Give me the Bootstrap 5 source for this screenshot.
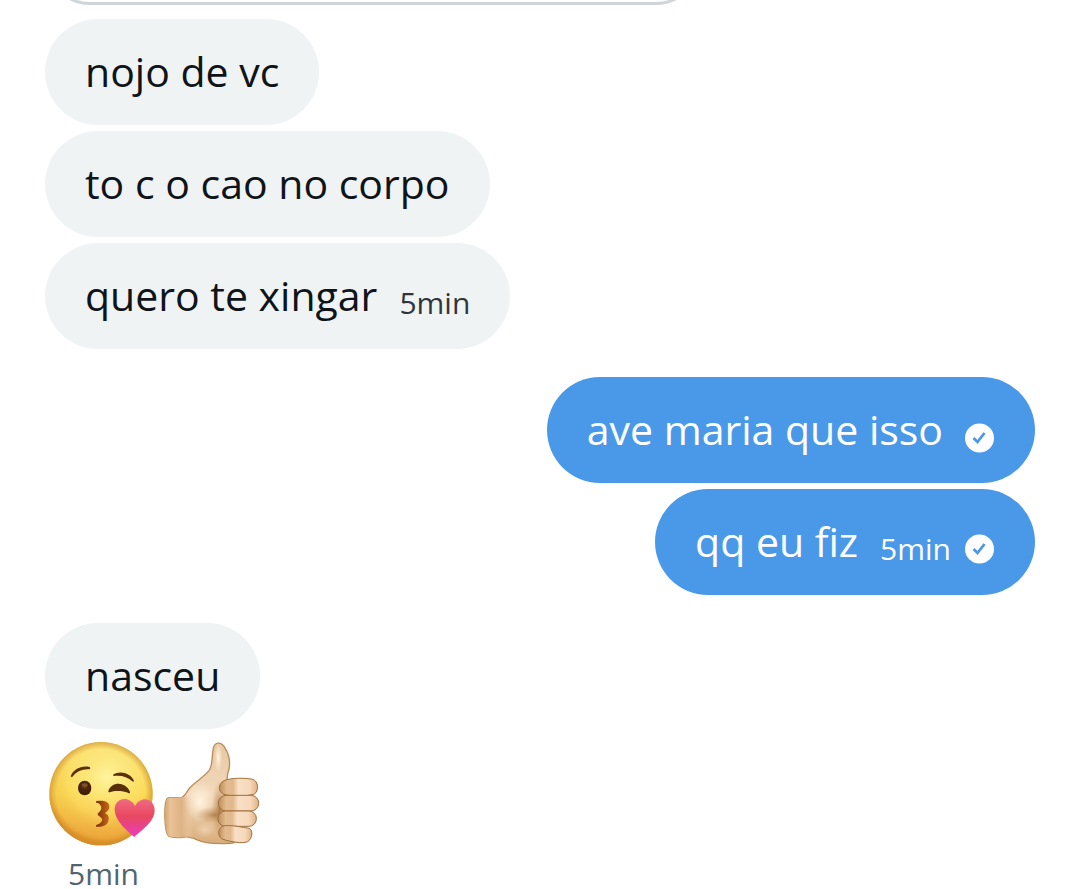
<!DOCTYPE html>
<html lang="pt-BR">
<head>
<meta charset="utf-8">
<meta name="viewport" content="width=device-width, initial-scale=1">
<title>Mensagens</title>
<link href="https://cdn.jsdelivr.net/npm/bootstrap@5.3.0/dist/css/bootstrap.min.css" rel="stylesheet">
<style>
  body { font-family: "Open Sans", "Noto Sans", sans-serif; color: #0f1419; background: #fff; }
  .chat { padding: 0 45px; }
  .preview-clip { height: 5px; margin-bottom: 14px; }
  .preview { width: 656px; height: 120px; border: 3px solid #cfd5d8; border-radius: 45px; }
  .turn { gap: 6px; margin-bottom: 28px; }
  .bubble { padding: 23px 40px 25px; border-radius: 53px; background: #eff3f4; font-size: 41px; line-height: 58px; gap: 22px; }
  .sent .bubble { background: #4a99e9; color: #fff; }
  .meta { font-size: 30px; line-height: 40px; gap: 14px; color: #2f363b; margin-bottom: 1px; }
  .sent .meta { color: #fff; }
  .tick { width: 30px; height: 30px; }
  .emojis { gap: 9px; margin: 6px 0 0 3px; }
  .below { font-size: 30px; line-height: 30px; color: #536471; padding-left: 23px; margin-top: 6px; }
</style>
</head>
<body>
<main class="chat">
  <div class="preview-clip d-flex align-items-end overflow-hidden"><div class="preview flex-shrink-0"></div></div>

  <section class="turn d-flex flex-column align-items-start">
    <div class="bubble d-flex">nojo de vc</div>
    <div class="bubble d-flex">to c o cao no corpo</div>
    <div class="bubble d-flex align-items-end"><span>quero te xingar</span><time class="meta">5min</time></div>
  </section>

  <section class="turn sent d-flex flex-column align-items-end">
    <div class="bubble d-flex align-items-end"><span>ave maria que isso</span>
      <span class="meta d-flex align-items-center"><svg class="tick my-1" viewBox="0 0 30 30" role="img" aria-label="Enviada"><circle cx="14.500" cy="15" r="14.500" fill="#fff"/><path d="M8.500 15l4 4 7-9" fill="none" stroke="#4a99e9" stroke-width="2.800"/></svg></span>
    </div>
    <div class="bubble d-flex align-items-end"><span>qq eu fiz</span>
      <span class="meta d-flex align-items-center"><time>5min</time><svg class="tick my-1" viewBox="0 0 30 30" role="img" aria-label="Enviada"><circle cx="14.500" cy="15" r="14.500" fill="#fff"/><path d="M8.500 15l4 4 7-9" fill="none" stroke="#4a99e9" stroke-width="2.800"/></svg></span>
    </div>
  </section>

  <section class="d-flex flex-column align-items-start turn mb-0">
    <div class="bubble d-flex">nasceu</div>
    <div class="emojis d-flex">
      <svg width="107" height="106" viewBox="24 18 321 318" role="img" aria-label="Rosto mandando beijo">
        <defs>
          <linearGradient id="skin" x1="0" y1="0" x2="0" y2="1"><stop offset="0" stop-color="#f7df7c"/><stop offset=".5" stop-color="#f9d552"/><stop offset="1" stop-color="#eb9f3c"/></linearGradient>
          <radialGradient id="shine" cx=".56" cy=".34" r=".64"><stop offset="0" stop-color="#fff6a5" stop-opacity=".9"/><stop offset=".6" stop-color="#ffe568" stop-opacity=".4"/><stop offset=".88" stop-color="#edaa30" stop-opacity=".15"/><stop offset="1" stop-color="#d98a1c" stop-opacity=".65"/></radialGradient>
          <radialGradient id="rim"><stop offset=".86" stop-color="#cc8a26" stop-opacity="0"/><stop offset="1" stop-color="#c98a2c" stop-opacity=".6"/></radialGradient>
          <linearGradient id="heart" x1="0" y1="0" x2="0" y2="1"><stop offset="0" stop-color="#ef6b83"/><stop offset=".45" stop-color="#e8485f"/><stop offset="1" stop-color="#e93bc0"/></linearGradient>
          <linearGradient id="lips" x1="0" x2="1"><stop offset="0" stop-color="#792c08"/><stop offset="1" stop-color="#c66a18"/></linearGradient>
          <radialGradient id="eye" cx=".5" cy=".35"><stop offset="0" stop-color="#7c491c"/><stop offset=".5" stop-color="#4b260c"/><stop offset="1" stop-color="#432006"/></radialGradient>
        </defs>
        <circle cx="183" cy="176" r="155" fill="url(#skin)"/>
        <circle cx="183" cy="176" r="155" fill="url(#shine)"/>
        <circle cx="183" cy="176" r="155" fill="url(#rim)"/>
        <path d="M92 124C101 102 124 91 149 96C152 98 151 103 147 103C125 102 108 110 96 127Z" fill="#5b3006"/>
        <path d="M219 119C240 105 272 114 282 137C283 140 279 141 276 138C262 126 245 120 221 123Z" fill="#5b3006"/>
        <ellipse cx="134" cy="159" rx="20" ry="22" fill="url(#eye)"/>
        <ellipse cx="134" cy="150" rx="9" ry="5" fill="#966331" opacity=".6"/>
        <path d="M205 169C213 139 257 138 270 171C271 175 267 176 264 173C249 168 225 166 209 172Q205 173 205 169Z" fill="#573008"/>
        <path d="M170 198C191 195 207 200 208 213C209 224 201 231 195 234C205 239 209 247 205 259C201 273 184 277 169 275C167 273 168 270 171 269C181 266 188 258 186 252C185 247 173 243 173 238C173 233 184 228 184 219C184 211 178 204 169 203C167 201 168 199 170 198Z" fill="url(#lips)"/>
        <path d="M283 306C267 292 224 260 224 223C224 188 268 180 285 213C302 180 344 189 344 226C344 261 302 288 283 306Z" fill="url(#heart)"/>
      </svg>
      <svg width="97" height="105" viewBox="27 18 291 315" role="img" aria-label="Polegar para cima">
        <defs>
          <linearGradient id="palm" x1="0" y1="0" x2="0" y2="1"><stop offset="0" stop-color="#e6c7a2"/><stop offset=".5" stop-color="#f3d9bb"/><stop offset="1" stop-color="#d9ad7c"/></linearGradient>
          <linearGradient id="wrist"><stop offset="0" stop-color="#d0a270"/><stop offset=".2" stop-color="#e9c296"/><stop offset=".6" stop-color="#deb283"/><stop offset="1" stop-color="#f0d2ae" stop-opacity="0"/></linearGradient>
          <linearGradient id="finger"><stop offset="0" stop-color="#c08d58"/><stop offset=".2" stop-color="#e3bb8f"/><stop offset=".36" stop-color="#e2b88c"/><stop offset=".5" stop-color="#f8dfc6"/><stop offset=".8" stop-color="#f7d8ba"/><stop offset="1" stop-color="#dfb384"/></linearGradient>
          <radialGradient id="glow"><stop offset="0" stop-color="#fff4df"/><stop offset="1" stop-color="#fff0db" stop-opacity="0"/></radialGradient>
          <radialGradient id="shade"><stop offset="0" stop-color="#9d6c36" stop-opacity=".8"/><stop offset=".4" stop-color="#b5854f" stop-opacity=".5"/><stop offset="1" stop-color="#bd8f5b" stop-opacity="0"/></radialGradient>
          <path id="hand" d="M44 188C58 188 70 189 80 187C91 184 94 171 104 159C121 140 148 125 162 107C173 92 170 70 174 45C177 19 198 19 209 37C223 59 228 89 218 116L215 140L238 323C221 327 181 327 154 323C128 319 110 302 88 306C71 309 55 307 42 304C26 292 27 204 36 191Q39 188 44 188Z"/>
          <clipPath id="hand-clip"><use href="#hand"/></clipPath>
        </defs>
        <use href="#hand" fill="url(#palm)" stroke="#b98d59" stroke-width="4"/>
        <g clip-path="url(#hand-clip)">
          <path d="M28 185H115V312H28Z" fill="url(#wrist)"/>
          <ellipse cx="135" cy="200" rx="45" ry="62" fill="url(#glow)"/>
          <ellipse cx="190" cy="67" rx="12" ry="45" fill="url(#glow)"/>
          <ellipse cx="183" cy="240" rx="62" ry="26" fill="url(#shade)"/>
          <ellipse cx="194" cy="222" rx="24" ry="88" fill="url(#shade)"/>
          <ellipse cx="150" cy="285" rx="30" ry="24" fill="url(#glow)" opacity=".4"/>
        </g>
        <g fill="url(#finger)" stroke="#a06f3b" stroke-width="3">
          <path d="M207 137C229 127 275 129 293 133C311 138 312 169 298 177C273 185 231 184 210 179C188 174 188 147 207 137Z"/>
          <rect x="190" y="181" width="121" height="47" rx="23"/>
          <rect x="189" y="228" width="115" height="46" rx="22"/>
          <path d="M211 272C236 270 264 278 279 279C296 281 293 312 278 320C258 327 229 320 207 314C184 308 187 273 211 272Z"/>
        </g>
      </svg>
    </div>
    <time class="below">5min</time>
  </section>
</main>
<script src="https://cdn.jsdelivr.net/npm/bootstrap@5.3.0/dist/js/bootstrap.bundle.min.js"></script>
</body>
</html>
